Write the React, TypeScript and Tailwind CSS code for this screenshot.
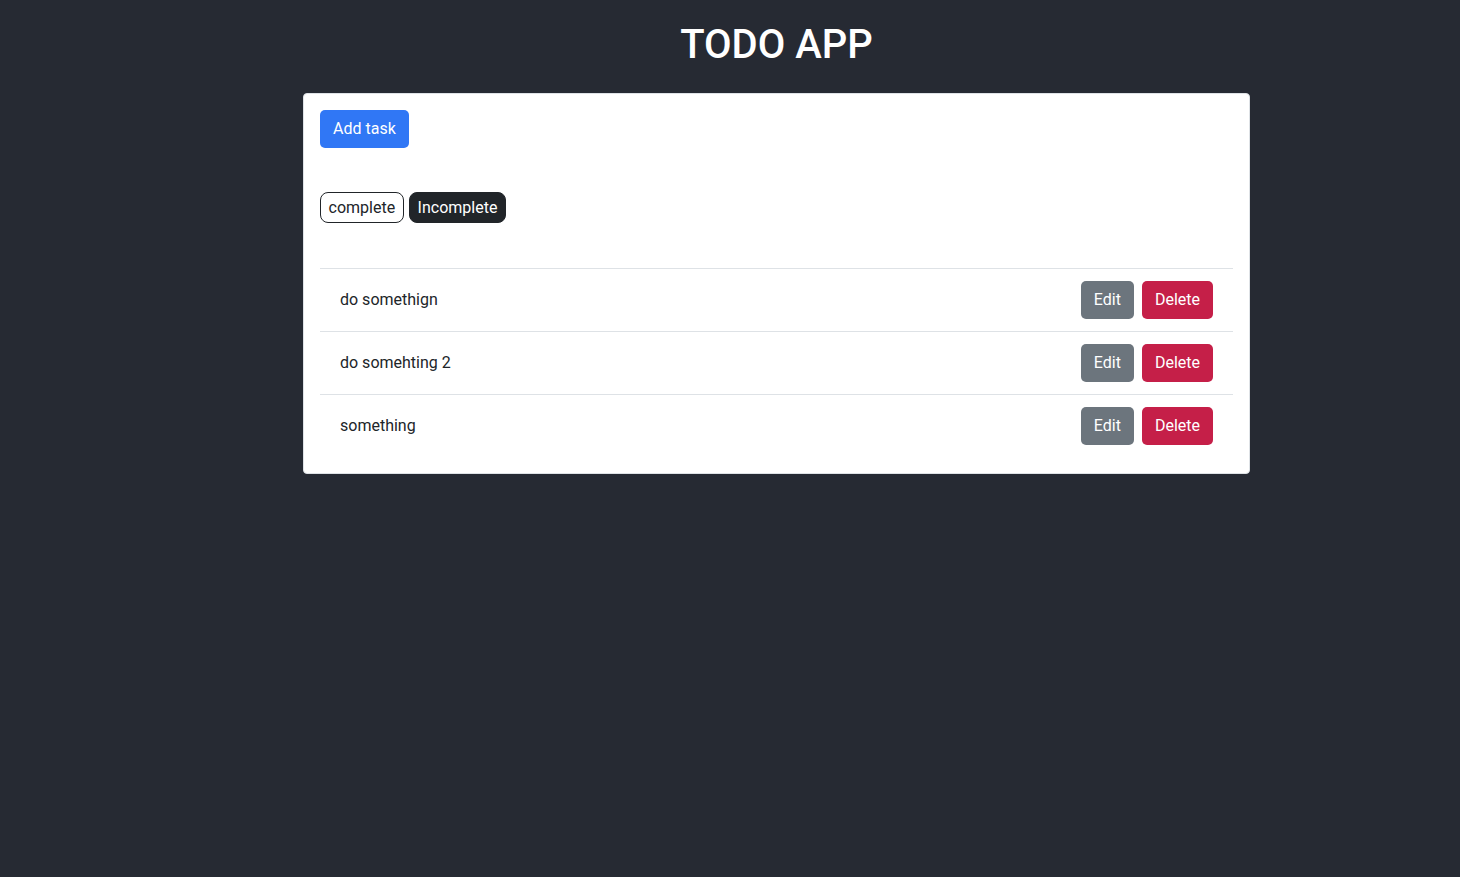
const tasks = ['do somethign', 'do somehting 2', 'something']

function TaskRow({ title }: { title: string }) {
  return (
    <li className="flex items-center justify-between border-t border-[#dee2e6] py-3 pl-5 pr-5">
      <span>{title}</span>
      <div className="flex gap-2">
        <button className="h-[38px] rounded-[5px] bg-[#6c757d] px-[13px] text-white">Edit</button>
        <button className="h-[38px] rounded-[5px] bg-[#c51f48] px-[13px] text-white">Delete</button>
      </div>
    </li>
  )
}

export default function App() {
  return (
    <div
      className="min-h-[877px] bg-[#262a33] text-base leading-6 text-[#212529]"
      style={{ fontFamily: 'Roboto, "Liberation Sans", sans-serif' }}
    >
      <div className="ml-[303px] w-[947px] pt-[21px]">
        <h1 className="mb-[24px] text-center text-[40px] font-medium leading-[48px] text-white">TODO APP</h1>

        <div className="rounded-[4px] border border-[#dee2e6] bg-white p-4">
          <button className="h-[38px] rounded-[5px] bg-[#3077f5] px-[13px] text-white">Add task</button>

          {/* filtros */}
          <div className="mt-[44px] flex gap-[5px]">
            <button className="h-[31px] rounded-[8px] border border-[#212529] bg-white px-[7.5px] leading-[23px]">complete</button>
            <button className="h-[31px] rounded-[8px] border border-[#212529] bg-[#212529] px-2 leading-[23px] text-white">Incomplete</button>
          </div>

          <ul className="mt-[45px]">
            {tasks.map((t) => (
              <TaskRow key={t} title={t} />
            ))}
          </ul>
        </div>
      </div>
    </div>
  )
}
